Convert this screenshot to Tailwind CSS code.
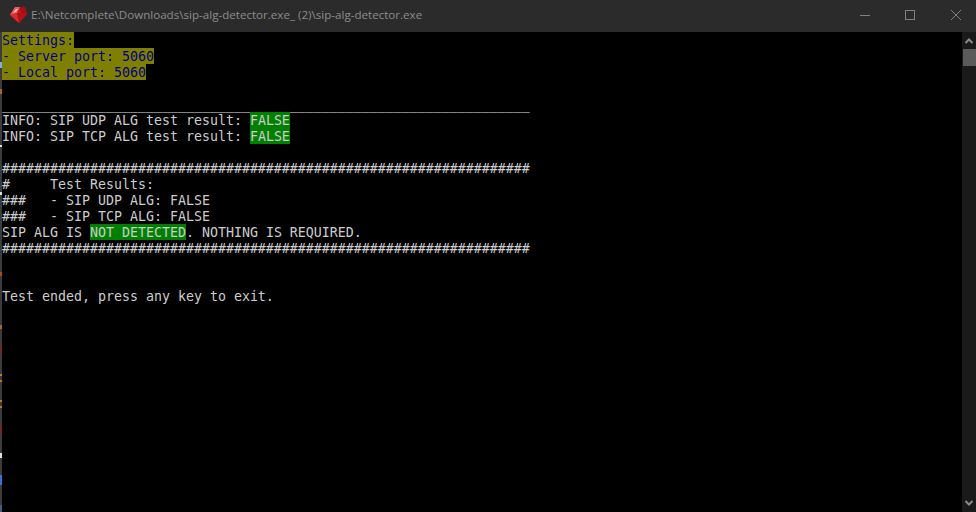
<!DOCTYPE html>
<html lang="en">
<head>
  <meta charset="UTF-8">
  <title>sip-alg-detector</title>
  <script src="https://cdn.jsdelivr.net/npm/@tailwindcss/browser@4"></script>
</head>
<body class="bg-black overflow-hidden">
  <div class="w-[976px] h-[512px] flex flex-col overflow-hidden">
    <!-- title bar -->
    <div class="h-[32px] bg-[#2b2b2b] flex flex-col shrink-0">
      <div class="h-[2px] flex bg-[#3a3a3a]">
        <div class="w-[101px]"></div>
        <div class="w-[25px] bg-[#6f6f6f]"></div><div class="w-[12px] bg-[#5fae5f]"></div><div class="w-[13px] bg-[#6f6f6f]"></div>
        <div class="w-[15px]"></div>
        <div class="w-[28px] bg-[#6f6f6f]"></div><div class="w-[16px] bg-[#5fae5f]"></div><div class="w-[26px] bg-[#6f6f6f]"></div>
        <div class="w-[12px]"></div>
        <div class="w-[28px] bg-[#6f6f6f]"></div><div class="w-[12px] bg-[#5a7d5a]"></div><div class="w-[80px] bg-[#6f6f6f]"></div>
        <div class="w-[12px] bg-[#a58cc0]"></div><div class="w-[24px] bg-[#6f6f6f]"></div>
        <div class="w-[12px]"></div>
        <div class="w-[12px] bg-[#6f6f6f]"></div><div class="w-[13px] bg-[#6fb4e8]"></div><div class="w-[12px] bg-[#6f6f6f]"></div>
        <div class="w-[12px]"></div>
        <div class="w-[18px] bg-[#6f6f6f]"></div><div class="w-[4px] bg-[#5fae5f]"></div><div class="w-[18px] bg-[#6f6f6f]"></div>
      </div>
      <div class="flex-1 flex items-center pl-[10px] pb-[2px]">
        <svg width="17" height="16" viewBox="0 0 17 16" class="shrink-0">
          <polygon points="5,0 15,0 17,7 9,16 0,8" fill="#c4161b"/>
          <polygon points="5,0 10,0 7,6 0,8" fill="#ee5a5c"/>
          <polygon points="6,2 8,2 6,5 3.5,5.5" fill="#ffd8d8"/>
          <polygon points="10,0 15,0 17,7 11,6" fill="#a50f14"/>
          <polygon points="0,8 7,6 9,16" fill="#dc2a2e"/>
          <polygon points="7,6 11,6 17,7 9,16" fill="#b01218"/>
        </svg>
        <span class="ml-[4px] text-[11.6px] text-[#8c8c8c] font-['Open_Sans',sans-serif]">E:\Netcomplete\Downloads\sip-alg-detector.exe_ (2)\sip-alg-detector.exe</span>
        <div class="ml-auto flex items-center text-[#808080]">
          <svg width="45" height="30" viewBox="0 0 45 30"><path d="M18 15.5h10" stroke="currentColor"/></svg>
          <svg width="45" height="30" viewBox="0 0 45 30"><rect x="18.5" y="10.5" width="9" height="9" fill="none" stroke="currentColor"/></svg>
          <svg width="44" height="30" viewBox="0 0 44 30"><path d="M19 10l10 10M29 10l-10 10" stroke="currentColor"/></svg>
        </div>
      </div>
    </div>

    <div class="flex-1 flex min-h-0">
      <!-- sliver of the window behind -->
      <div class="w-[2px] bg-[#3c3c3c] flex flex-col shrink-0">
        <div class="h-[30px]"></div>
        <div class="h-[6px] bg-[#7fb0e0]"></div>
        <div class="h-[21px]"></div>
        <div class="h-[5px] bg-[#a8672a]"></div>
        <div class="h-[51px]"></div>
        <div class="h-[2px] bg-[#dddddd]"></div>
        <div class="h-[45px]"></div>
        <div class="h-[3px] bg-[#dddddd]"></div>
        <div class="h-[77px]"></div>
        <div class="h-[4px] bg-[#a84a20]"></div>
        <div class="h-[49px]"></div>
        <div class="h-[4px] bg-[#a8672a]"></div>
        <div class="h-[16px]"></div>
        <div class="h-[10px] bg-[#6b2a2a]"></div>
        <div class="h-[19px]"></div>
        <div class="h-[2px] bg-[#c07a20]"></div>
        <div class="h-[4px]"></div>
        <div class="h-[2px] bg-[#c07a20]"></div>
        <div class="h-[18px]"></div>
        <div class="h-[2px] bg-[#c07a20]"></div>
        <div class="h-[4px]"></div>
        <div class="h-[2px] bg-[#c07a20]"></div>
        <div class="h-[16px]"></div>
        <div class="h-[10px] bg-[#6b2a2a]"></div>
        <div class="h-[19px]"></div>
        <div class="h-[5px] bg-[#e0e0e0]"></div>
        <div class="h-[17px]"></div>
        <div class="h-[10px] bg-[#3f6fd0]"></div>
        <div class="h-[20px]"></div>
        <div class="h-[7px] bg-[#4a5a80]"></div>
      </div>

      <!-- console output -->
      <div class="flex-1 bg-black text-[13.29px] leading-[14px] text-[#cccccc] font-['DejaVu_Sans_Mono',monospace]">
        <div class="flex flex-col items-start text-[#000080]">
          <div class="bg-[#808000] whitespace-pre pt-[2px]">Settings:</div>
          <div class="bg-[#808000] whitespace-pre pt-[2px]">- Server port: 5060</div>
          <div class="bg-[#808000] whitespace-pre pt-[2px]">- Local port: 5060</div>
        </div>
        <div class="h-[16px]"></div>
        <div class="whitespace-pre pt-[2px]">__________________________________________________________________</div>
        <div class="whitespace-pre pt-[2px]">INFO: SIP UDP ALG test result: <span class="inline-block bg-[#008000] pt-[2px] -mt-[2px]">FALSE</span></div>
        <div class="whitespace-pre pt-[2px]">INFO: SIP TCP ALG test result: <span class="inline-block bg-[#008000] pt-[2px] -mt-[2px]">FALSE</span></div>
        <div class="h-[16px]"></div>
        <div class="whitespace-pre pt-[2px]">##################################################################</div>
        <div class="whitespace-pre pt-[2px]">#     Test Results:</div>
        <div class="whitespace-pre pt-[2px]">###   - SIP UDP ALG: FALSE</div>
        <div class="whitespace-pre pt-[2px]">###   - SIP TCP ALG: FALSE</div>
        <div class="whitespace-pre pt-[2px]">SIP ALG IS <span class="inline-block bg-[#008000] pt-[2px] -mt-[2px]">NOT DETECTED</span>. NOTHING IS REQUIRED.</div>
        <div class="whitespace-pre pt-[2px]">##################################################################</div>
        <div class="h-[32px]"></div>
        <div class="whitespace-pre pt-[2px]">Test ended, press any key to exit.</div>
      </div>

      <!-- scrollbar -->
      <div class="w-[14px] bg-[#1a1a1a] flex flex-col items-center shrink-0">
        <svg width="14" height="17" viewBox="0 0 14 17" class="text-[#8a8a8a]"><path d="M3.5 11L7 7.5 10.5 11" fill="none" stroke="currentColor" stroke-width="2"/></svg>
        <div class="w-[13px] ml-[1px] h-[17px] bg-[#5a5a5a]"></div>
        <svg width="14" height="17" viewBox="0 0 14 17" class="mt-auto text-[#8a8a8a]"><path d="M3.5 6L7 9.5 10.5 6" fill="none" stroke="currentColor" stroke-width="2"/></svg>
      </div>
    </div>
  </div>
</body>
</html>
